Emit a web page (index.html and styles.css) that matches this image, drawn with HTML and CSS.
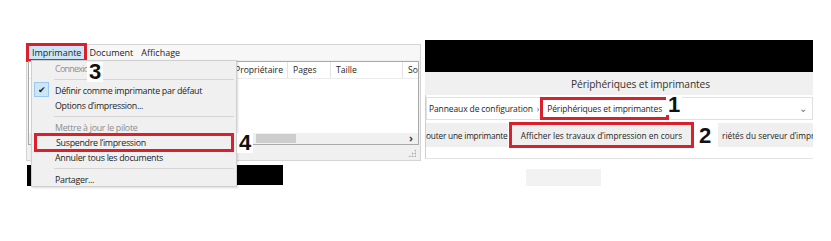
FILE: index.html
```html
<!DOCTYPE html>
<html lang="fr">
<head>
<meta charset="utf-8">
<link rel="stylesheet" href="styles.css">
</head>
<body>
<div class="canvas">

  <!-- Left: print queue window -->
  <div class="lwin">
    <div class="menubar">
      <span class="mb-item active">Imprimante</span>
      <span class="mb-item">Document</span>
      <span class="mb-item">Affichage</span>
    </div>
    <div class="lbody">
      <div class="list">
        <div class="lhead">
          <span class="col c0">Nom du document</span>
          <span class="col c1">Propriétaire</span>
          <span class="col c2">Pages</span>
          <span class="col c3">Taille</span>
          <span class="col c4">Soumis</span>
        </div>
        <div class="lrows"></div>
        <div class="hscroll">
          <span class="thumb"></span>
          <span class="arrow">›</span>
        </div>
      </div>
      <div class="status"><span class="grip"></span></div>
    </div>
  </div>

  <div class="blk blk-left"></div>
  <div class="blk blk-mid"></div>

  <!-- Dropdown menu -->
  <div class="menu">
    <div class="mi dis tight">Connexio</div>
    <div class="sep"></div>
    <div class="mi"><span class="check">✔</span>Définir comme imprimante par défaut</div>
    <div class="mi">Options d’impression...</div>
    <div class="sep"></div>
    <div class="mi dis">Mettre à jour le pilote</div>
    <div class="mi mark">Suspendre l’impression</div>
    <div class="mi">Annuler tous les documents</div>
    <div class="sep"></div>
    <div class="mi">Partager...</div>
  </div>

  <!-- Right: devices and printers -->
  <div class="rwin">
    <div class="rblack"></div>
    <div class="rtitle">Périphériques et imprimantes</div>
    <div class="raddr">
      <div class="field">
        <span class="crumb">Panneaux de configuration</span>
        <span class="chev">›</span>
        <span class="crumb boxed">Périphériques et imprimantes</span>
        <span class="dd">⌄</span>
      </div>
    </div>
    <div class="rtool">
      <span class="tb first">outer une imprimante</span>
      <span class="tb boxed2">Afficher les travaux d’impression en cours</span>
      <span class="tb gap"></span>
      <span class="tb last">riétés du serveur d’impre</span>
    </div>
    <div class="rcontent">
      <div class="greyrect"></div>
    </div>
  </div>

  <span class="num n1">1</span>
  <span class="num n2">2</span>
  <span class="num n3">3</span>
  <span class="num n4">4</span>
</div>
</body>
</html>
```
FILE: styles.css
```css
* { box-sizing: border-box; }
html, body { margin: 0; padding: 0; background: #fff; }
body { font-family: "Open Sans", "Noto Sans", sans-serif; color: #1e1e1e; }
.canvas { position: relative; width: 831px; height: 241px; overflow: hidden; background: #fff; }

/* left window */
.lwin {
  position: absolute; left: 26px; top: 44px; width: 395px; height: 117px; z-index: 1;
  background: #f0f0f0; border: 1px solid #d4d4d4;
  display: flex; flex-direction: column;
}
.menubar {
  height: 15px; display: flex; align-items: center;
  background: #f7f7f7; font-size: 9px; padding-left: 2px;
}
.mb-item { padding: 0 3px; line-height: 13px; margin-right: 2px; }
.mb-item.active { background: #cde6f7; outline: 3px solid #d8212c; }
.lbody { flex: 1; display: flex; flex-direction: column; padding: 1px 1px 0 1px; }
.list {
  height: 84px; background: #fff; border: 1px solid #a9a9a9;
  display: flex; flex-direction: column; overflow: hidden;
}
.lhead { display: flex; height: 17px; border-bottom: 1px solid #ececec; font-size: 8.6px; align-items: center; white-space: nowrap; }
.col { height: 100%; display: flex; align-items: center; border-right: 1px solid #e3e3e3; overflow: hidden; }
.c0 { width: 206px; padding-left: 4px; }
.c1 { width: 53px; padding-left: 0; }
.c2 { width: 43px; padding-left: 5px; }
.c3 { width: 72px; padding-left: 5px; }
.c4 { flex: 1; padding-left: 5px; border-right: 0; }
.lrows { flex: 1; }
.hscroll { height: 11px; background: #f0f0f0; position: relative; }
.thumb { position: absolute; left: 227px; top: 1px; width: 40px; height: 9px; background: #cdcdcd; }
.arrow { position: absolute; right: 5px; top: -3px; font-size: 11px; color: #444; font-weight: bold; }
.status { flex: 1; position: relative; }
.grip {
  position: absolute; right: 3px; bottom: 3px; width: 8px; height: 8px;
  background: radial-gradient(circle, #b0b0b0 0.8px, transparent 1.2px) 0 0 / 3px 3px;
  clip-path: polygon(100% 0, 100% 100%, 0 100%);
}

.blk { position: absolute; background: #000; z-index: 1; }
.blk-left { left: 27px; top: 165px; width: 4px; height: 21px; }
.blk-mid { left: 237px; top: 165px; width: 46px; height: 20px; }

/* menu */
.menu {
  position: absolute; left: 31px; top: 60px; width: 206px; height: 127px; z-index: 3;
  background: #f0f0f0; border: 1px solid #cfcfcf; padding: 0 1px;
  font-size: 8.9px; letter-spacing: -0.3px; box-shadow: 1px 1px 2px rgba(0,0,0,0.15);
}
.mi { height: 15px; line-height: 15px; padding-left: 22px; position: relative; white-space: nowrap; }
.mi.dis { color: #8d8d8d; }
.mi.tight { letter-spacing: -0.7px; }
.sep { height: 7px; position: relative; }
.sep::after { content: ""; position: absolute; left: 21px; right: 1px; top: 3px; height: 1px; background: #d5d5d5; }
.check {
  position: absolute; left: 1px; top: -1px; width: 15px; height: 15px;
  background: #cde6f7; border: 1px solid #99c9ef; font-size: 9px; line-height: 13px;
  text-align: center; color: #1d1d1d; letter-spacing: 0;
}
.mi.mark {
  height: 19px; line-height: 13px; margin: -2px 1px; padding-left: 19px;
  border: 3px solid #d8212c; z-index: 1;
}

/* right window */
.rwin { position: absolute; left: 425px; top: 40px; width: 388px; display: flex; flex-direction: column; z-index: 1; }
.rblack { height: 32px; background: #000; }
.rtitle {
  height: 23px; background: #f0f0f0; font-size: 10.2px; color: #333; letter-spacing: -0.1px;
  display: flex; align-items: center; justify-content: center; padding-left: 43px;
}
.raddr { height: 27px; background: #fff; padding: 2px 0; border-left: 1px solid #cfcfcf; }
.field {
  height: 23px; border: 1px solid #e0e0e0; display: flex; align-items: center;
  font-size: 8.5px; letter-spacing: -0.12px; padding-left: 2px; position: relative; white-space: nowrap;
}
.chev { margin: 0 7px 0 4px; color: #666; }
.crumb.boxed { outline: 3px solid #d8212c; outline-offset: 3px; padding: 0 1px; }
.dd { position: absolute; right: 5px; top: 3px; color: #777; font-size: 10px; }
.rtool {
  height: 37px; display: flex; align-items: flex-start; font-size: 8.3px;
  border-left: 1px solid #cfcfcf; border-bottom: 1px solid #e3e3e3;
}
.tb { height: 24px; margin-top: 1px; background: #efefef; display: flex; align-items: center; white-space: nowrap; }
.tb.first { width: 82px; letter-spacing: -0.2px; overflow: hidden; }
.tb.boxed2 { width: 185px; margin-left: 1px; margin-top: 0; justify-content: center; border: 3px solid #d8212c; height: 26px; }
.tb.gap { width: 24px; background: #fff; }
.tb.last { flex: 1; overflow: hidden; padding-left: 4px; }
.rcontent { height: 40px; position: relative; }
.greyrect { position: absolute; left: 101px; top: 10px; width: 75px; height: 17px; background: #f2f2f2; }

/* annotation numbers */
.num {
  position: absolute; z-index: 5; background: #fff; font-family: "Liberation Sans", Arial, sans-serif;
  font-weight: bold; font-size: 22px; line-height: 20px; color: #111; padding: 0 2px;
}
.n1 { left: 666px; top: 95px; }
.n2 { left: 697px; top: 126px; }
.n3 { left: 87px; top: 62px; }
.n4 { left: 237px; top: 133px; }
```
